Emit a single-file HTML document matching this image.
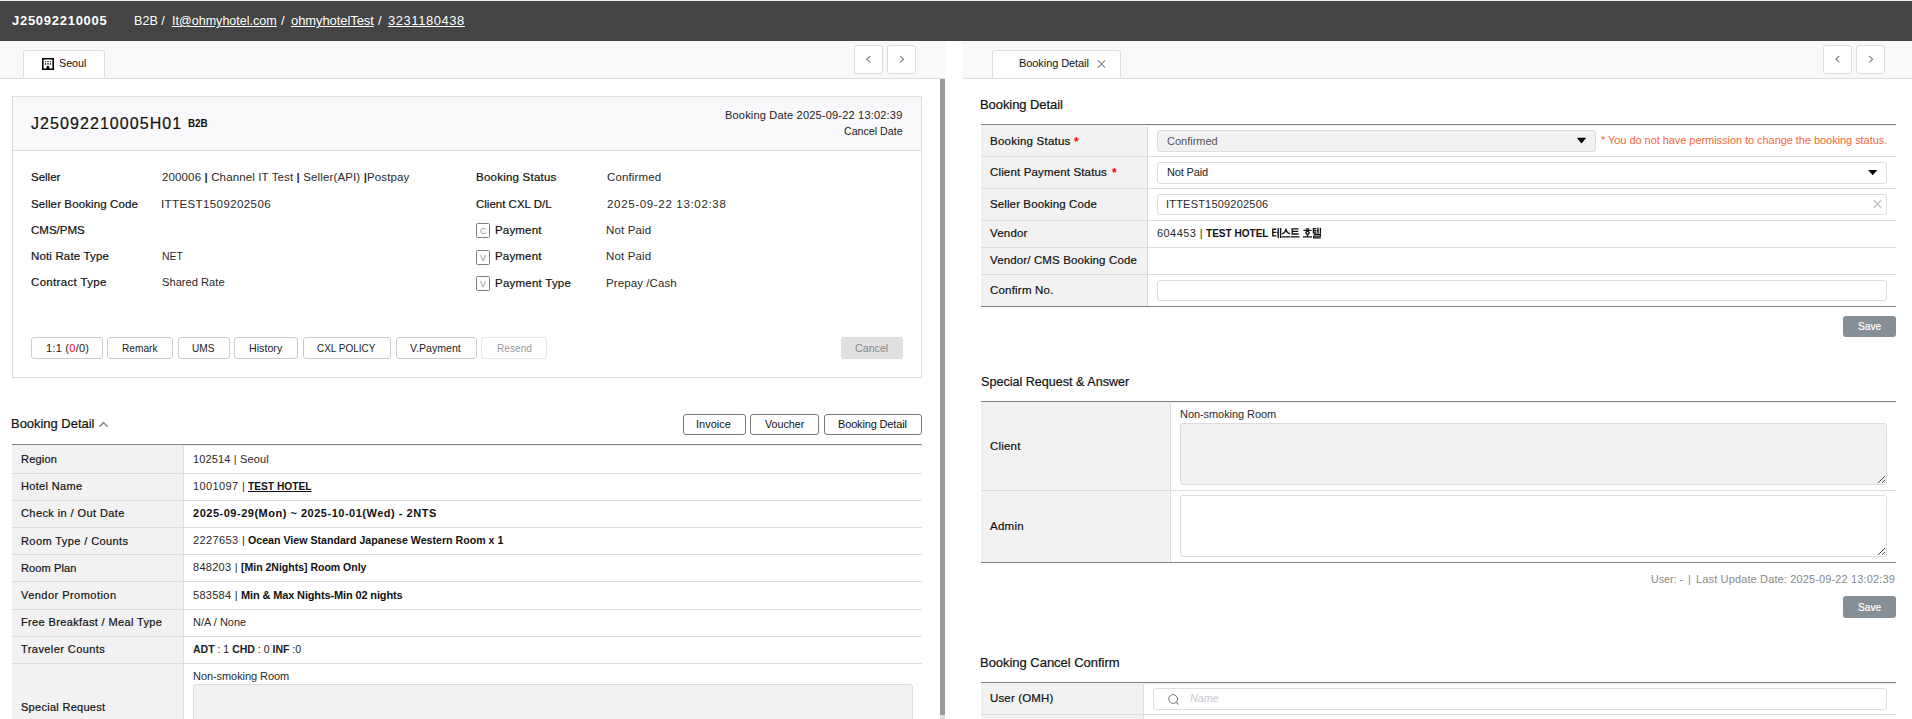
<!DOCTYPE html>
<html lang="en"><head><meta charset="utf-8"><title>Booking Detail</title>
<style>
*{margin:0;padding:0;box-sizing:content-box}
html,body{width:1912px;height:719px;overflow:hidden;background:#fff}
body{position:relative;font-family:'Liberation Sans',sans-serif;font-size:11px;color:#2a2a2a}
div,span,svg{position:absolute}
span{white-space:pre;line-height:1;transform-origin:0 0}
b{font-weight:700}
i.r{color:#f00;font-style:normal}
span span, span b, span u, span i{position:static}
</style></head>
<body>
<div style="left:0px;top:0px;width:1912px;height:1px;background:#ececec"></div>
<div style="left:0px;top:1px;width:1912px;height:40px;background:#444"></div>
<span style="left:12.00px;top:14px;font-size:13px;font-weight:700;color:#fff;letter-spacing:0.727px;">J25092210005</span>
<span style="left:134.00px;top:14px;font-size:13px;color:#fff;transform:scaleX(0.9683);">B2B /</span>
<span style="left:172.00px;top:14px;font-size:13px;color:#fff;transform:scaleX(0.9652);"><u>It@ohmyhotel.com</u></span>
<span style="left:281.00px;top:14px;font-size:13px;color:#fff;">/</span>
<span style="left:291.00px;top:14px;font-size:13px;color:#fff;letter-spacing:-0.083px;"><u>ohmyhotelTest</u></span>
<span style="left:378.00px;top:14px;font-size:13px;color:#fff;">/</span>
<span style="left:388.00px;top:14px;font-size:13px;color:#fff;letter-spacing:0.556px;"><u>3231180438</u></span>
<div style="left:0px;top:41px;width:945px;height:37px;background:#f9f8fa"></div>
<div style="left:0px;top:78px;width:945px;height:1px;background:#ddd"></div>
<div style="left:23px;top:50px;width:80px;height:27px;border:1px solid #ddd;border-bottom:0;border-radius:3px 3px 0 0;background:#fff"></div>
<svg style="left:42px;top:58px" width="12" height="12" viewBox="0 0 12 12"><rect width="12" height="12" fill="#000"/><path d="M1.6 1.5h8.8v8.9H7.3V9.2a1.4 1.3 0 0 0-2.8 0v1.2H1.6z" fill="#fff"/><g fill="#2a2a2a"><rect x="2.9" y="3" width="1.2" height="1"/><rect x="5.3" y="3" width="1.4" height="1"/><rect x="7.9" y="3" width="1.2" height="1"/><rect x="2.9" y="4.9" width="1.2" height="1.8"/><rect x="5.3" y="4.9" width="1.4" height="1.8"/><rect x="7.9" y="4.9" width="1.2" height="1.8"/></g></svg>
<span style="left:59.00px;top:58px;font-size:11px;color:#111;transform:scaleX(0.9719);">Seoul</span>
<div style="left:854px;top:45px;width:27px;height:27px;border:1px solid #ddd;background:#fff;border-radius:3px;"></div>
<div style="left:887px;top:45px;width:27px;height:27px;border:1px solid #ddd;background:#fff;border-radius:3px;"></div>
<svg style="left:854px;top:45px" width="29" height="29"><path d="M16.3 11 12.7 14.2l3.6 3.2" fill="none" stroke="#858585" stroke-width="1.15"/></svg>
<svg style="left:887px;top:45px" width="29" height="29"><path d="M13.1 11l3.6 3.2-3.6 3.2" fill="none" stroke="#858585" stroke-width="1.15"/></svg>
<div style="left:940px;top:79px;width:5px;height:636px;background:#999"></div>
<div style="left:940px;top:715px;width:5px;height:4px;background:#ddd"></div>
<div style="left:12px;top:96px;width:908px;height:280px;border:1px solid #ddd;background:#fff"></div>
<div style="left:13px;top:97px;width:908px;height:53px;background:#f9f8fa"></div>
<div style="left:13px;top:150px;width:908px;height:1px;background:#ddd"></div>
<span style="left:31.00px;top:116px;font-size:16px;color:#111;letter-spacing:1.071px;-webkit-text-stroke:.2px;">J25092210005H01</span>
<span style="left:188.00px;top:119px;font-size:10px;font-weight:700;color:#111;transform:scaleX(0.9801);">B2B</span>
<span style="left:725.00px;top:110px;font-size:11px;color:#222;letter-spacing:0.194px;">Booking Date 2025-09-22 13:02:39</span>
<span style="left:844.00px;top:126px;font-size:11px;color:#222;transform:scaleX(0.9674);">Cancel Date</span>
<span style="left:31.00px;top:172px;font-size:11.5px;color:#111;-webkit-text-stroke:.2px;">Seller</span>
<span style="left:31.00px;top:199px;font-size:11.5px;color:#111;letter-spacing:0.111px;-webkit-text-stroke:.2px;">Seller Booking Code</span>
<span style="left:31.00px;top:225px;font-size:11.5px;color:#111;-webkit-text-stroke:.2px;">CMS/PMS</span>
<span style="left:31.00px;top:251px;font-size:11.5px;color:#111;letter-spacing:0.154px;-webkit-text-stroke:.2px;">Noti Rate Type</span>
<span style="left:31.00px;top:277px;font-size:11.5px;color:#111;letter-spacing:0.333px;-webkit-text-stroke:.2px;">Contract Type</span>
<span style="left:162.00px;top:172px;font-size:11.5px;letter-spacing:0.130px;">200006 <b>|</b> Channel IT Test <b>|</b> Seller(API) <b>|</b>Postpay</span>
<span style="left:161.00px;top:199px;font-size:11.5px;letter-spacing:0.400px;">ITTEST1509202506</span>
<span style="left:162.00px;top:251px;font-size:11.5px;transform:scaleX(0.9112);">NET</span>
<span style="left:162.00px;top:277px;font-size:11.5px;transform:scaleX(0.9692);">Shared Rate</span>
<span style="left:476.00px;top:172px;font-size:11.5px;color:#111;letter-spacing:0.231px;-webkit-text-stroke:.2px;">Booking Status</span>
<span style="left:476.00px;top:199px;font-size:11.5px;color:#111;-webkit-text-stroke:.2px;">Client CXL D/L</span>
<div style="left:476px;top:223px;width:12px;height:13px;border:1px solid #808080;background:#fff;border-radius:1.5px;"></div>
<div style="left:476px;top:250px;width:12px;height:13px;border:1px solid #808080;background:#fff;border-radius:1.5px;"></div>
<div style="left:476px;top:276px;width:12px;height:13px;border:1px solid #808080;background:#fff;border-radius:1.5px;"></div>
<span style="left:480.00px;top:227px;font-size:9px;color:#999;">C</span>
<span style="left:480.00px;top:254px;font-size:9px;color:#999;">V</span>
<span style="left:480.00px;top:280px;font-size:9px;color:#999;">V</span>
<span style="left:495.00px;top:225px;font-size:11.5px;color:#111;letter-spacing:0.167px;-webkit-text-stroke:.2px;">Payment</span>
<span style="left:495.00px;top:251px;font-size:11.5px;color:#111;letter-spacing:0.167px;-webkit-text-stroke:.2px;">Payment</span>
<span style="left:495.00px;top:278px;font-size:11.5px;color:#111;letter-spacing:0.236px;-webkit-text-stroke:.2px;">Payment Type</span>
<span style="left:607.00px;top:172px;font-size:11.5px;letter-spacing:0.125px;">Confirmed</span>
<span style="left:607.00px;top:199px;font-size:11.5px;letter-spacing:0.667px;">2025-09-22 13:02:38</span>
<span style="left:606.00px;top:225px;font-size:11.5px;letter-spacing:0.143px;">Not Paid</span>
<span style="left:606.00px;top:251px;font-size:11.5px;letter-spacing:0.143px;">Not Paid</span>
<span style="left:606.00px;top:278px;font-size:11.5px;letter-spacing:0.091px;">Prepay /Cash</span>
<div style="left:31px;top:337px;width:70px;height:20px;border:1px solid #ccc;background:#fff;border-radius:3px;"></div>
<span style="left:46.00px;top:343px;font-size:11px;color:#222;letter-spacing:0.250px;">1:1 (<i class="r">0</i>/0)</span>
<div style="left:107px;top:337px;width:64px;height:20px;border:1px solid #ccc;background:#fff;border-radius:3px;"></div>
<span style="left:122.00px;top:343px;font-size:11px;color:#222;transform:scaleX(0.9231);">Remark</span>
<div style="left:178px;top:337px;width:50px;height:20px;border:1px solid #ccc;background:#fff;border-radius:3px;"></div>
<span style="left:192.00px;top:343px;font-size:11px;color:#222;transform:scaleX(0.9173);">UMS</span>
<div style="left:234px;top:337px;width:62px;height:20px;border:1px solid #ccc;background:#fff;border-radius:3px;"></div>
<span style="left:249.00px;top:343px;font-size:11px;color:#222;transform:scaleX(0.9714);">History</span>
<div style="left:303px;top:337px;width:86px;height:20px;border:1px solid #ccc;background:#fff;border-radius:3px;"></div>
<span style="left:317.00px;top:343px;font-size:11px;color:#222;transform:scaleX(0.9063);">CXL POLICY</span>
<div style="left:396px;top:337px;width:79px;height:20px;border:1px solid #ccc;background:#fff;border-radius:3px;"></div>
<span style="left:410.00px;top:343px;font-size:11px;color:#222;transform:scaleX(0.9624);">V.Payment</span>
<div style="left:481px;top:337px;width:64px;height:20px;border:1px solid #e6e6e6;background:#fff;border-radius:3px;"></div>
<span style="left:497.00px;top:343px;font-size:11px;color:#999;transform:scaleX(0.9213);">Resend</span>
<div style="left:841px;top:337px;width:62px;height:22px;background:#e0e0e0;border-radius:3px"></div>
<span style="left:855.00px;top:343px;font-size:11px;color:#888;transform:scaleX(0.9709);">Cancel</span>
<span style="left:11.00px;top:417px;font-size:13px;color:#111;letter-spacing:-0.031px;-webkit-text-stroke:.2px;">Booking Detail</span>
<svg style="left:98px;top:420px" width="12" height="9"><path d="M1.6 6.6 5.6 2.7l4 3.9" fill="none" stroke="#8c8c8c" stroke-width="1.6"/></svg>
<div style="left:683px;top:414px;width:61px;height:19px;border:1px solid #777;background:#fff;border-radius:3px;"></div>
<span style="left:696.00px;top:419px;font-size:11px;color:#111;">Invoice</span>
<div style="left:750px;top:414px;width:67px;height:19px;border:1px solid #777;background:#fff;border-radius:3px;"></div>
<span style="left:765.00px;top:419px;font-size:11px;color:#111;transform:scaleX(0.9758);">Voucher</span>
<div style="left:824px;top:414px;width:96px;height:19px;border:1px solid #777;background:#fff;border-radius:3px;"></div>
<span style="left:838.00px;top:419px;font-size:11px;color:#111;letter-spacing:-0.154px;">Booking Detail</span>
<div style="left:12px;top:445px;width:171px;height:274px;background:#f2f2f2"></div>
<div style="left:12px;top:444px;width:910px;height:1px;background:#848484"></div>
<div style="left:183px;top:445px;width:739px;height:1px;background:#ececec"></div>
<div style="left:183px;top:446px;width:1px;height:273px;background:#ddd"></div>
<div style="left:12px;top:473px;width:910px;height:1px;background:#ddd"></div>
<div style="left:12px;top:500px;width:910px;height:1px;background:#ddd"></div>
<div style="left:12px;top:527px;width:910px;height:1px;background:#ddd"></div>
<div style="left:12px;top:554px;width:910px;height:1px;background:#ddd"></div>
<div style="left:12px;top:581px;width:910px;height:1px;background:#ddd"></div>
<div style="left:12px;top:609px;width:910px;height:1px;background:#ddd"></div>
<div style="left:12px;top:636px;width:910px;height:1px;background:#ddd"></div>
<div style="left:12px;top:663px;width:910px;height:1px;background:#ddd"></div>
<span style="left:21.00px;top:454px;font-size:11px;color:#111;letter-spacing:0.200px;-webkit-text-stroke:.2px;">Region</span>
<span style="left:21.00px;top:481px;font-size:11px;color:#111;letter-spacing:0.333px;-webkit-text-stroke:.2px;">Hotel Name</span>
<span style="left:21.00px;top:508px;font-size:11px;color:#111;letter-spacing:0.411px;-webkit-text-stroke:.2px;">Check in / Out Date</span>
<span style="left:21.00px;top:536px;font-size:11px;color:#111;letter-spacing:0.412px;-webkit-text-stroke:.2px;">Room Type / Counts</span>
<span style="left:21.00px;top:563px;font-size:11px;color:#111;letter-spacing:0.125px;-webkit-text-stroke:.2px;">Room Plan</span>
<span style="left:21.00px;top:590px;font-size:11px;color:#111;letter-spacing:0.467px;-webkit-text-stroke:.2px;">Vendor Promotion</span>
<span style="left:21.00px;top:617px;font-size:11px;color:#111;letter-spacing:0.360px;-webkit-text-stroke:.2px;">Free Breakfast / Meal Type</span>
<span style="left:21.00px;top:644px;font-size:11px;color:#111;letter-spacing:0.429px;-webkit-text-stroke:.2px;">Traveler Counts</span>
<span style="left:21.00px;top:702px;font-size:11px;color:#111;letter-spacing:0.286px;-webkit-text-stroke:.2px;">Special Request</span>
<span style="left:193.00px;top:454px;font-size:11px;letter-spacing:0.154px;">102514 | Seoul</span>
<span style="left:193.00px;top:481px;font-size:11px;letter-spacing:0.375px;">1001097 |</span>
<span style="left:248.00px;top:481px;font-size:11px;font-weight:700;color:#111;transform:scaleX(0.9277);"><u>TEST HOTEL</u></span>
<span style="left:193.00px;top:508px;font-size:11px;font-weight:700;color:#111;letter-spacing:0.513px;">2025-09-29(Mon) ~ 2025-10-01(Wed) - 2NTS</span>
<span style="left:193.00px;top:535px;font-size:11px;letter-spacing:0.375px;">2227653 |</span>
<span style="left:248.00px;top:535px;font-size:11px;font-weight:700;color:#111;transform:scaleX(0.9660);">Ocean View Standard Japanese Western Room x 1</span>
<span style="left:193.00px;top:562px;font-size:11px;letter-spacing:0.286px;">848203 |</span>
<span style="left:241.00px;top:562px;font-size:11px;font-weight:700;color:#111;transform:scaleX(0.9545);">[Min 2Nights] Room Only</span>
<span style="left:193.00px;top:590px;font-size:11px;letter-spacing:0.286px;">583584 |</span>
<span style="left:241.00px;top:590px;font-size:11px;font-weight:700;color:#111;letter-spacing:-0.138px;">Min &amp; Max Nights-Min 02 nights</span>
<span style="left:193.00px;top:617px;font-size:11px;">N/A / None</span>
<span style="left:193.00px;top:644px;font-size:11px;color:#222;transform:scaleX(0.9558);"><b>ADT</b> : 1 <b>CHD</b> : 0 <b>INF</b> :0</span>
<span style="left:193.00px;top:671px;font-size:11px;letter-spacing:-0.067px;">Non-smoking Room</span>
<div style="left:193px;top:684px;width:718px;height:58px;border:1px solid #ddd;background:#f2f2f2;border-radius:3px;"></div>
<div style="left:963px;top:41px;width:949px;height:37px;background:#f9f8fa"></div>
<div style="left:963px;top:78px;width:949px;height:1px;background:#ddd"></div>
<div style="left:992px;top:50px;width:127px;height:27px;border:1px solid #ddd;border-bottom:0;border-radius:3px 3px 0 0;background:#fff"></div>
<span style="left:1019.00px;top:58px;font-size:11px;color:#111;letter-spacing:-0.077px;">Booking Detail</span>
<svg style="left:1096px;top:59px" width="11" height="11"><path d="M1.9 1.4l7.2 7.2M9.1 1.4 1.9 8.6" fill="none" stroke="#808080" stroke-width="1.1"/></svg>
<div style="left:1823px;top:45px;width:27px;height:27px;border:1px solid #ddd;background:#fff;border-radius:3px;"></div>
<div style="left:1856px;top:45px;width:27px;height:27px;border:1px solid #ddd;background:#fff;border-radius:3px;"></div>
<svg style="left:1823px;top:45px" width="29" height="29"><path d="M16.3 11 12.7 14.2l3.6 3.2" fill="none" stroke="#858585" stroke-width="1.15"/></svg>
<svg style="left:1856px;top:45px" width="29" height="29"><path d="M13.1 11l3.6 3.2-3.6 3.2" fill="none" stroke="#858585" stroke-width="1.15"/></svg>
<span style="left:980.00px;top:98px;font-size:13px;color:#111;letter-spacing:-0.077px;-webkit-text-stroke:.2px;">Booking Detail</span>
<div style="left:981px;top:125px;width:166px;height:181px;background:#f2f2f2"></div>
<div style="left:981px;top:124px;width:915px;height:1px;background:#848484"></div>
<div style="left:1147px;top:125px;width:749px;height:1px;background:#ececec"></div>
<div style="left:1147px;top:126px;width:1px;height:180px;background:#ddd"></div>
<div style="left:981px;top:156px;width:915px;height:1px;background:#ddd"></div>
<div style="left:981px;top:188px;width:915px;height:1px;background:#ddd"></div>
<div style="left:981px;top:220px;width:915px;height:1px;background:#ddd"></div>
<div style="left:981px;top:247px;width:915px;height:1px;background:#ddd"></div>
<div style="left:981px;top:274px;width:915px;height:1px;background:#ddd"></div>
<div style="left:981px;top:306px;width:915px;height:1px;background:#848484"></div>
<span style="left:990.00px;top:136px;font-size:11.5px;color:#111;letter-spacing:0.231px;-webkit-text-stroke:.2px;">Booking Status</span>
<span style="left:1074.00px;top:136px;font-size:12px;font-weight:700;color:#f00;">*</span>
<span style="left:990.00px;top:167px;font-size:11.5px;color:#111;letter-spacing:0.150px;-webkit-text-stroke:.2px;">Client Payment Status</span>
<span style="left:1112.00px;top:167px;font-size:12px;font-weight:700;color:#f00;">*</span>
<span style="left:990.00px;top:199px;font-size:11.5px;color:#111;letter-spacing:0.111px;-webkit-text-stroke:.2px;">Seller Booking Code</span>
<span style="left:990.00px;top:228px;font-size:11.5px;color:#111;letter-spacing:0.200px;-webkit-text-stroke:.2px;">Vendor</span>
<span style="left:990.00px;top:255px;font-size:11.5px;color:#111;letter-spacing:0.130px;-webkit-text-stroke:.2px;">Vendor/ CMS Booking Code</span>
<span style="left:990.00px;top:285px;font-size:11.5px;color:#111;letter-spacing:0.200px;-webkit-text-stroke:.2px;">Confirm No.</span>
<div style="left:1157px;top:130px;width:437px;height:20px;border:1px solid #ddd;background:#f2f2f2;border-radius:3px;"></div>
<span style="left:1167.00px;top:136px;font-size:11px;color:#555;">Confirmed</span>
<svg style="left:1576px;top:137px" width="12" height="8"><path d="M.8.7h9.4L5.5 6.4z" fill="#000"/></svg>
<span style="left:1601.00px;top:135px;font-size:11px;color:#f5683d;letter-spacing:-0.053px;">* You do not have permission to change the booking status.</span>
<div style="left:1157px;top:162px;width:728px;height:20px;border:1px solid #ddd;background:#fff;border-radius:3px;"></div>
<span style="left:1167.00px;top:167px;font-size:11px;color:#222;letter-spacing:-0.143px;">Not Paid</span>
<svg style="left:1867px;top:169px" width="12" height="8"><path d="M1.1.9h9.2L5.7 6.2z" fill="#000"/></svg>
<div style="left:1157px;top:194px;width:728px;height:19px;border:1px solid #ddd;background:#fff;border-radius:3px;"></div>
<span style="left:1166.00px;top:199px;font-size:11px;letter-spacing:0.200px;">ITTEST1509202506</span>
<svg style="left:1872px;top:199px" width="12" height="11"><path d="M1.8 1.1l7.4 7.8M9.2 1.1 1.8 8.9" fill="none" stroke="#c4c4c4" stroke-width="1.5"/></svg>
<span style="left:1157.00px;top:228px;font-size:11px;letter-spacing:0.429px;">604453 |</span>
<span style="left:1206.00px;top:228px;font-size:11px;font-weight:700;color:#111;transform:scaleX(0.9131);">TEST HOTEL</span>
<svg style="left:1271px;top:227px" width="51" height="12" viewBox="0 0 51 12" fill="none" stroke="#111" stroke-width="1.35"><path d="M1.2 2.2h4M1.8 2.2v6.6h3.6M1.8 5.4h3.2M7.2 1v10M9.6 1v10M5.6 5.4h1.6"/><path d="M15 1.4c0 2.6-1.6 4.4-4 5.4M15 2.8c.4 1.8 1.8 3.2 4 4M10.6 9.8h8.8"/><path d="M20.6 1.8h7M21.2 1.8v5.2h6.4M21.2 4.4h6M19.8 9.8h8.8"/><path d="M34.8 1.8h3.4M32.4 3.4h8.2M36.5 4.4a1.6 1.5 0 1 0 .01 0M36.5 7.6v2.2M32 9.9h9"/><path d="M41.8 1.6h3.6M42.4 1.6v4.2h3M42.4 3.7h2.8M47 .8v5.8M49.4 .8v5.8M45.6 3.7H47M42.8 7.4h6.6v1.7h-6.6v1.8h7"/></svg>
<div style="left:1157px;top:280px;width:728px;height:19px;border:1px solid #ddd;background:#fff;border-radius:3px;"></div>
<div style="left:1843px;top:316px;width:53px;height:21px;background:#868e96;border-radius:3px"></div>
<span style="left:1858.00px;top:321px;font-size:11px;color:#fff;transform:scaleX(0.9206);-webkit-text-stroke:.2px;">Save</span>
<span style="left:981.00px;top:375px;font-size:13px;color:#111;transform:scaleX(0.9676);-webkit-text-stroke:.2px;">Special Request &amp; Answer</span>
<div style="left:981px;top:402px;width:189px;height:160px;background:#f2f2f2"></div>
<div style="left:981px;top:401px;width:915px;height:1px;background:#848484"></div>
<div style="left:1170px;top:402px;width:726px;height:1px;background:#ececec"></div>
<div style="left:1170px;top:403px;width:1px;height:159px;background:#ddd"></div>
<div style="left:981px;top:490px;width:915px;height:1px;background:#ddd"></div>
<div style="left:981px;top:562px;width:915px;height:1px;background:#848484"></div>
<span style="left:990.00px;top:441px;font-size:11.5px;color:#111;letter-spacing:0.200px;-webkit-text-stroke:.2px;">Client</span>
<span style="left:990.00px;top:521px;font-size:11.5px;color:#111;letter-spacing:0.250px;-webkit-text-stroke:.2px;">Admin</span>
<span style="left:1180.00px;top:409px;font-size:11px;letter-spacing:-0.067px;">Non-smoking Room</span>
<div style="left:1180px;top:423px;width:705px;height:60px;border:1px solid #ddd;background:#f2f2f2;border-radius:3px;"></div>
<div style="left:1180px;top:495px;width:705px;height:60px;border:1px solid #ddd;background:#fff;border-radius:3px;"></div>
<svg style="left:1878px;top:476px" width="7" height="7" shape-rendering="crispEdges"><path d="M0 6h1v1h-1zM1 5h1v1h-1zM2 4h1v1h-1zM3 3h1v1h-1zM4 2h1v1h-1zM5 1h1v1h-1zM6 0h1v1h-1zM4 6h1v1h-1zM5 5h1v1h-1zM6 4h1v1h-1z" fill="#505050"/></svg>
<svg style="left:1878px;top:548px" width="7" height="7" shape-rendering="crispEdges"><path d="M0 6h1v1h-1zM1 5h1v1h-1zM2 4h1v1h-1zM3 3h1v1h-1zM4 2h1v1h-1zM5 1h1v1h-1zM6 0h1v1h-1zM4 6h1v1h-1zM5 5h1v1h-1zM6 4h1v1h-1z" fill="#505050"/></svg>
<span style="left:1651.00px;top:574px;font-size:11px;color:#888;transform:scaleX(0.9697);">User: -</span>
<span style="left:1688.00px;top:574px;font-size:11px;color:#888;">|</span>
<span style="left:1696.00px;top:574px;font-size:11px;color:#888;letter-spacing:0.139px;">Last Update Date: 2025-09-22 13:02:39</span>
<div style="left:1843px;top:596px;width:53px;height:22px;background:#868e96;border-radius:3px"></div>
<span style="left:1858.00px;top:602px;font-size:11px;color:#fff;transform:scaleX(0.9206);-webkit-text-stroke:.2px;">Save</span>
<span style="left:980.00px;top:656px;font-size:13px;color:#111;letter-spacing:-0.029px;-webkit-text-stroke:.2px;">Booking Cancel Confirm</span>
<div style="left:981px;top:683px;width:162px;height:36px;background:#f2f2f2"></div>
<div style="left:981px;top:682px;width:915px;height:1px;background:#848484"></div>
<div style="left:1143px;top:683px;width:753px;height:1px;background:#ececec"></div>
<div style="left:1143px;top:684px;width:1px;height:35px;background:#ddd"></div>
<div style="left:981px;top:714px;width:915px;height:1px;background:#ddd"></div>
<span style="left:990.00px;top:693px;font-size:11.5px;color:#111;letter-spacing:0.156px;-webkit-text-stroke:.2px;">User (OMH)</span>
<div style="left:1153px;top:688px;width:732px;height:20px;border:1px solid #ddd;background:#fff;border-radius:3px;"></div>
<svg style="left:1166px;top:692px" width="15" height="15"><circle cx="7.2" cy="7" r="4.4" fill="none" stroke="#757575" stroke-width="1"/><path d="M10.3 10.4l2.3 1.9" stroke="#757575" stroke-width="1.1"/></svg>
<span style="left:1190.00px;top:693px;font-size:11px;color:#c9cad3;transform:scaleX(0.9797);font-style:italic;">Name</span>
</body></html>
